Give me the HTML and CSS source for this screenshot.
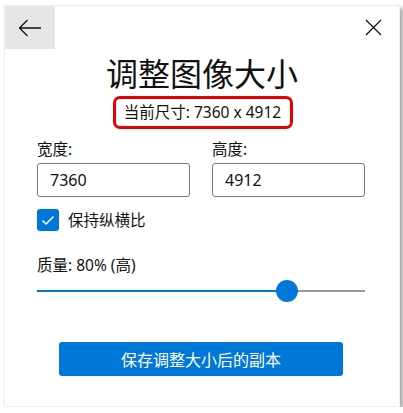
FILE: index.html
```html
<!DOCTYPE html>
<html lang="zh-CN">
<head>
    <meta charset="UTF-8">
    <meta name="viewport" content="width=device-width, initial-scale=1.0">
    <link rel="stylesheet" href="styles.css">
    <title>调整图像大小</title>
</head>
<body>
  <div class="dialog">
    <div class="dialog-header">
      <div class="back-button">
        <svg width="24" height="18" viewBox="0 0 24 18">
          <path d="M23 9H1.5M9.5 1L1.5 9L9.5 17" fill="none" stroke="#111" stroke-width="1.3"/>
        </svg>
      </div>
      <div class="close-button">
        <svg width="17" height="17" viewBox="0 0 17 17">
          <path d="M1 1L16 16M16 1L1 16" fill="none" stroke="#111" stroke-width="1.3"/>
        </svg>
      </div>
    </div>

    <div class="dialog-title">调整图像大小</div>
    <div class="size-row">
      <span class="current-size">当前尺寸: 7360 x 4912</span>
    </div>

    <div class="dialog-body">
      <div class="size-fields">
        <div class="field">
          <label>宽度:</label>
          <div class="text-box">7360</div>
        </div>
        <div class="field">
          <label>高度:</label>
          <div class="text-box">4912</div>
        </div>
      </div>

      <div class="check-row">
        <span class="check-box">
          <svg width="14" height="11" viewBox="0 0 14 11">
            <path d="M1.5 5.5L5 9L12.5 1.5" fill="none" stroke="#fff" stroke-width="1.5"/>
          </svg>
        </span>
        <span>保持纵横比</span>
      </div>

      <div class="quality-label">质量: 80% (高)</div>
      <div class="slider">
        <div class="slider-fill" style="width: 72.8%"></div>
        <div class="slider-thumb"></div>
        <div class="slider-rest"></div>
      </div>

      <div class="button-row">
        <button class="save-button">保存调整大小后的副本</button>
      </div>
    </div>
  </div>
</body>
</html>
```

FILE: styles.css
```css
body {
    font-family: "Noto Sans", "Noto Sans CJK SC", sans-serif;
    margin: 0;
    padding: 0;
    background-color: #fff;
    color: #111;
}

.dialog {
    box-sizing: border-box;
    width: 396px;
    height: 402px;
    margin: 5px 0 0 4px;
    background-color: #fff;
    border: 1px solid #efefef;
    box-shadow: 3px 3px 4px rgba(0, 0, 0, 0.35);
}

.dialog-header {
    display: flex;
    justify-content: space-between;
    align-items: flex-start;
    height: 45px;
}

.back-button {
    width: 50px;
    height: 43px;
    background-color: #e6e6e6;
    display: flex;
    justify-content: center;
    align-items: center;
}

.close-button {
    width: 17px;
    height: 17px;
    margin: 13px 17px 0 0;
}

.close-button svg,
.back-button svg {
    display: block;
}

.dialog-title {
    text-align: center;
    font-size: 32px;
    line-height: 40px;
    margin-top: 1px;
    font-family: "Noto Sans CJK SC", sans-serif;
}

.size-row {
    text-align: center;
    margin-top: 4px;
}

.current-size {
    display: inline-block;
    box-sizing: border-box;
    width: 180px;
    height: 33px;
    line-height: 27px;
    font-size: 15.5px;
    border: 3px solid #e60000;
    border-radius: 7px;
    margin-left: 1px;
}

.dialog-body {
    padding: 0 34px 0 32px;
}

.size-fields {
    display: grid;
    grid-template-columns: 153px 153px;
    column-gap: 22px;
    margin-top: 10px;
}

.field label {
    display: block;
    font-size: 15.5px;
    line-height: 20px;
}

.text-box {
    box-sizing: border-box;
    height: 34px;
    margin-top: 4px;
    padding: 0 12px;
    line-height: 32px;
    font-size: 16px;
    border: 1px solid #7a7a7a;
    border-radius: 3px;
}

.check-row {
    display: flex;
    align-items: center;
    margin-top: 12px;
    font-size: 15.5px;
    line-height: 22px;
}

.check-box {
    display: flex;
    justify-content: center;
    align-items: center;
    width: 22px;
    height: 22px;
    background-color: #0078d7;
    border-radius: 3px;
    margin-right: 9px;
}

.quality-label {
    margin-top: 24px;
    font-size: 15.5px;
    line-height: 20px;
}

.slider {
    display: flex;
    align-items: center;
    height: 24px;
    margin-top: 4px;
}

.slider-fill {
    height: 2px;
    background-color: #0078d7;
}

.slider-thumb {
    flex: none;
    width: 22px;
    height: 22px;
    border-radius: 50%;
    background-color: #0078d7;
}

.slider-rest {
    flex: 1;
    height: 2px;
    background-color: #999;
}

.button-row {
    display: flex;
    justify-content: center;
    margin-top: 39px;
}

.save-button {
    width: 284px;
    height: 34px;
    border: none;
    border-radius: 3px;
    background-color: #0078d7;
    color: #fff;
    font-family: "Noto Sans CJK SC", sans-serif;
    font-size: 16px;
    padding: 0;
}
```
